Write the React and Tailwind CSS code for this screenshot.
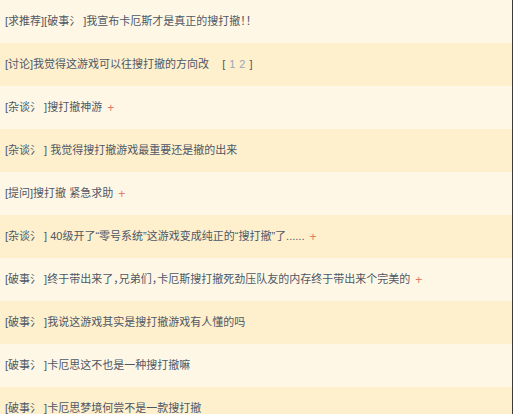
const threads = [
  { title: '[求推荐][破事氵 ]我宣布卡厄斯才是真正的搜打撤！！' },
  { title: '[讨论]我觉得这游戏可以往搜打撤的方向改', pages: ['1', '2'] },
  { title: '[杂谈氵 ]搜打撤神游', plus: true },
  { title: '[杂谈氵 ] 我觉得搜打撤游戏最重要还是撤的出来' },
  { title: '[提问]搜打撤 紧急求助', plus: true },
  { title: '[杂谈氵 ] 40级开了“零号系统”这游戏变成纯正的“搜打撤”了......', plus: true },
  { title: '[破事氵 ]终于带出来了，兄弟们，卡厄斯搜打撤死劲压队友的内存终于带出来个完美的', plus: true },
  { title: '[破事氵 ]我说这游戏其实是搜打撤游戏有人懂的吗' },
  { title: '[破事氵 ]卡厄思这不也是一种搜打撤嘛' },
  { title: '[破事氵 ]卡厄思梦境何尝不是一款搜打撤' },
]

function ThreadRow({ thread, odd }) {
  return (
    <div
      className={`h-[43px] flex items-center px-[5px] whitespace-nowrap ${
        odd ? 'bg-[#feefcd]' : 'bg-[#fff7e5]'
      }`}
    >
      <span className="text-[#4d5866]">{thread.title}</span>
      {thread.pages && (
        <span className="ml-[13px] flex items-center gap-[4px] text-[#4d5866]">
          <span>[</span>
          {thread.pages.map(p => (
            <span key={p} className="text-[#9aa6b2]">{p}</span>
          ))}
          <span>]</span>
        </span>
      )}
      {thread.plus && <span className="ml-[5px] text-[12px] text-[#e07a64]">+</span>}
    </div>
  )
}

export default function App() {
  return (
    <div
      className="w-[513px] h-[414px] overflow-hidden bg-[#fff7e5] border-r border-[#3a3a3a] text-[11px] leading-none [font-feature-settings:'halt']"
      style={{ fontFamily: '"Liberation Sans", "Noto Sans CJK SC", sans-serif' }}
    >
      {threads.map((t, i) => (
        <ThreadRow key={i} thread={t} odd={i % 2 === 1} />
      ))}
    </div>
  )
}
